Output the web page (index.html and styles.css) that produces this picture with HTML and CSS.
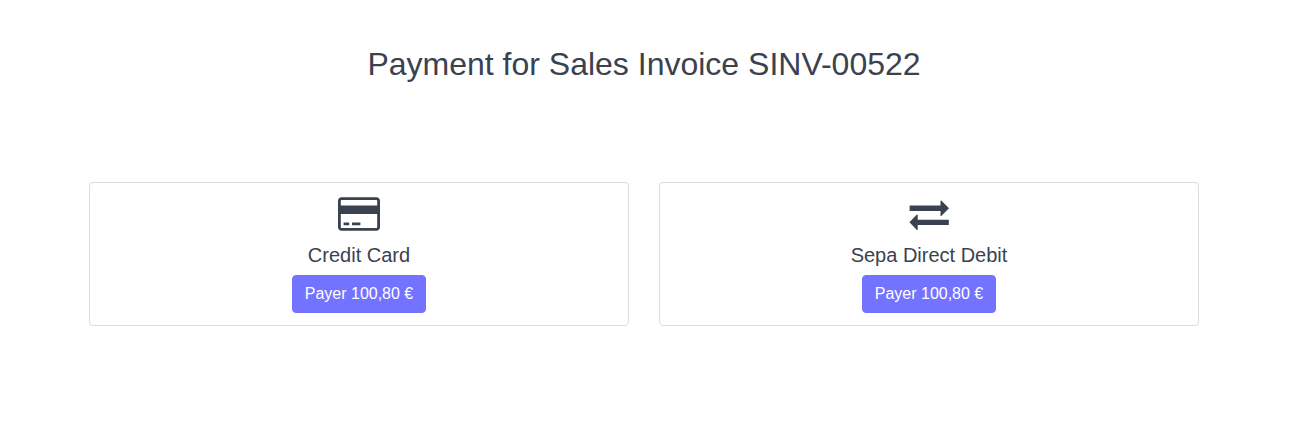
FILE: index.html
```html
<!DOCTYPE html>
<html lang="en">
<head>
<meta charset="utf-8">
<title>Payment</title>
<link rel="stylesheet" href="styles.css">
</head>
<body>
<main class="container">
  <h2 class="title">Payment for Sales Invoice SINV-00522</h2>
  <div class="cards">
    <section class="card">
      <svg class="icon icon-card" viewBox="0 -1536 1920 1792" aria-hidden="true"><g transform="scale(1,-1)"><path d="M1760 1408c88 0 160-72 160-160v-1216c0-88-72-160-160-160h-1600c-88 0-160 72-160 160v1216c0 88 72 160 160 160h1600zM160 1280c-17 0-32-15-32-32v-224h1664v224c0 17-15 32-32 32h-1600zM1760 0c17 0 32 15 32 32v608h-1664v-608c0-17 15-32 32-32h1600zM256 128v128h256v-128h-256zM640 128v128h384v-128h-384z"/></g></svg>
      <h5 class="name">Credit Card</h5>
      <a class="btn">Payer 100,80 €</a>
    </section>
    <section class="card">
      <svg class="icon icon-exchange" viewBox="0 0 40 40" aria-hidden="true"><path d="M1 11.4h30.5V7q0-.7.8-.5L40 14.2 32.3 22q-.8.3-.8-.5v-4.6H1q-.4 0-.4-.4v-4.7q0-.4.4-.4zM39.4 25.7H8.7v-4.6q0-.8-.8-.5L.4 28.3 7.9 36q.8.3.8-.5v-4.4h30.7q.4 0 .4-.4v-4.6q0-.4-.4-.4z"/></svg>
      <h5 class="name">Sepa Direct Debit</h5>
      <a class="btn">Payer 100,80 €</a>
    </section>
  </div>
</main>
</body>
</html>
```
FILE: styles.css
```css
* { box-sizing: border-box; }
body {
  margin: 0;
  background: #fff;
  color: #3a4250;
  font: 16px/1.5 "Liberation Sans", Arial, sans-serif;
}
.container {
  width: 1110px;
  margin-left: 89px;
  padding-top: 45px;
}
.title {
  margin: 0 0 99px;
  font-size: 32px;
  font-weight: 400;
  line-height: 38px;
  text-align: center;
}
.cards {
  display: grid;
  grid-template-columns: 1fr 1fr;
  gap: 30px;
}
.card {
  display: flex;
  flex-direction: column;
  align-items: center;
  height: 144px;
  padding-top: 11px;
  border: 1px solid #dcdcdc;
  border-radius: 4px;
}
.icon {
  display: block;
  height: 40px;
  fill: currentColor;
}
.icon-card { width: 42px; }
.icon-exchange { width: 40px; }
.name {
  margin: 9px 0 8px;
  font-size: 20px;
  font-weight: 400;
  line-height: 24px;
}
.btn {
  padding: 6px 12px;
  border: 1px solid #7373ff;
  border-radius: 4px;
  background: #7373ff;
  color: #fff;
}
```
